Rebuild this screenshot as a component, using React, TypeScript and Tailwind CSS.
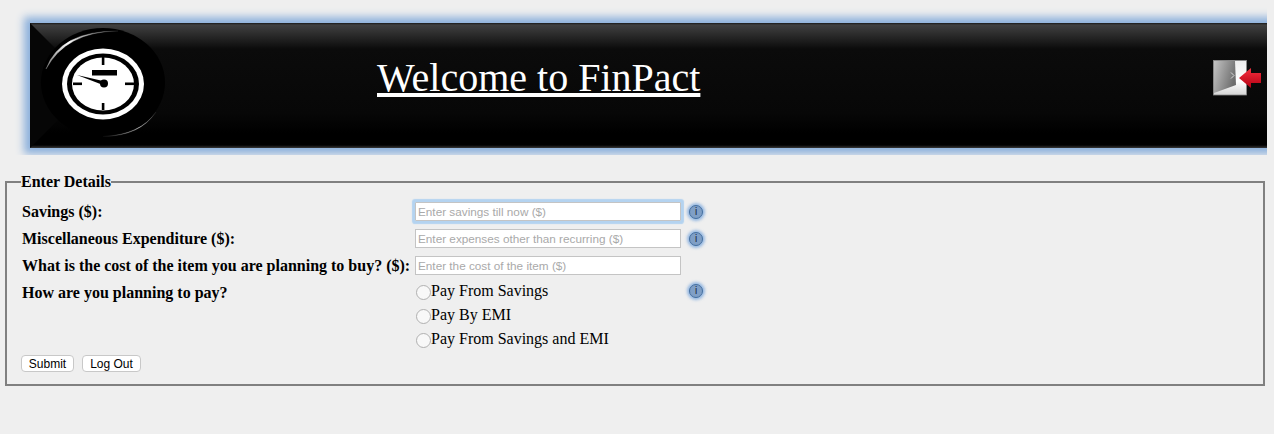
import React from "react";

const serif = "font-['Liberation_Serif','Times_New_Roman',serif]";

function Logo() {
  return (
    <svg width="140" height="125" viewBox="30 23 140 125" className="shrink-0 block">
      <defs>
        <linearGradient id="arcA" x1="0" y1="1" x2="1" y2="0">
          <stop offset="0" stopColor="#ffffff" stopOpacity="0.35" />
          <stop offset="0.5" stopColor="#ffffff" />
          <stop offset="1" stopColor="#ffffff" stopOpacity="0.1" />
        </linearGradient>
        <linearGradient id="arcB" x1="1" y1="0" x2="0" y2="1">
          <stop offset="0" stopColor="#ffffff" stopOpacity="0.1" />
          <stop offset="0.5" stopColor="#ffffff" stopOpacity="0.6" />
          <stop offset="1" stopColor="#ffffff" stopOpacity="0.05" />
        </linearGradient>
      </defs>
      <polygon points="30,23 60,53 60,118 30,148" fill="#060606" />
      <ellipse cx="103" cy="82.5" rx="62" ry="54.5" fill="#000000" />
      <path d="M46 69 Q60 31 118 31 Q66 31.5 46 69Z" fill="url(#arcA)" stroke="url(#arcA)" strokeWidth="0.5" />
      <path d="M103 136.5 Q140 136 156 112 Q140 135 103 136.5Z" fill="url(#arcB)" stroke="url(#arcB)" strokeWidth="0.4" />
      <ellipse cx="103" cy="84" rx="41" ry="35.5" fill="#ffffff" />
      <ellipse cx="103" cy="84" rx="36" ry="30.5" fill="#000000" />
      <ellipse cx="103" cy="84" rx="31" ry="26.5" fill="#ffffff" />
      <rect x="101.8" y="57" width="2.6" height="8" fill="#000" />
      <rect x="101.8" y="103" width="2.6" height="7" fill="#000" />
      <rect x="73" y="82.5" width="9" height="2.6" fill="#000" />
      <rect x="125" y="82.5" width="9" height="2.6" fill="#000" />
      <rect x="92" y="70" width="25" height="5.5" fill="#000" />
      <path d="M77 75 L103 81 L103 85 Z" fill="#000" />
      <circle cx="104" cy="83.5" r="4" fill="#000" />
    </svg>
  );
}

function DoorIcon() {
  return (
    <svg width="49" height="36" viewBox="1213 60 49 36" className="block">
      <defs>
        <linearGradient id="doorBg" x1="0" y1="0" x2="0" y2="1">
          <stop offset="0" stopColor="#ececec" />
          <stop offset="0.6" stopColor="#ffffff" />
          <stop offset="1" stopColor="#d4d4d4" />
        </linearGradient>
        <linearGradient id="door" x1="0" y1="0" x2="1" y2="0.4">
          <stop offset="0" stopColor="#c4c4c4" />
          <stop offset="1" stopColor="#6e6e6e" />
        </linearGradient>
        <linearGradient id="arrow" x1="0" y1="0" x2="0" y2="1">
          <stop offset="0" stopColor="#f6303f" />
          <stop offset="1" stopColor="#b30012" />
        </linearGradient>
      </defs>
      <rect x="1213.5" y="60.5" width="33" height="34.5" fill="url(#doorBg)" stroke="#8a8a8a" strokeWidth="0.8" />
      <polygon points="1214,61 1235,61 1236,85 1214,93" fill="url(#door)" />
      <path d="M1231 72.5 L1234 75.5 L1231 78.5" stroke="#d8d8d8" strokeWidth="1" fill="none" />
      <polygon points="1239,78 1251,68 1251,73 1261,73 1261,83 1251,83 1251,88" fill="url(#arrow)" />
    </svg>
  );
}

function Info() {
  return (
    <div className="ml-[1px] w-[14px] h-[14px] rounded-full bg-[#7f9fc6] border border-[#456f9f] shadow-[0_0_3px_2px_rgba(110,160,220,0.7)] flex items-center justify-center">
      <span className="font-['Liberation_Sans',Arial,sans-serif] text-[10px] leading-none text-[#16243a]">i</span>
    </div>
  );
}

function TextField({ placeholder, focused }: { placeholder: string; focused?: boolean }) {
  return (
    <input
      type="text"
      readOnly
      placeholder={placeholder}
      className={
        "w-[266px] h-[19px] bg-white px-[2px] border border-[#c4c4c4] font-['Liberation_Sans',Arial,sans-serif] text-[11.75px] outline-none placeholder:text-[#a9a9a9] " +
        (focused ? "rounded-[1px] shadow-[0_0_1px_3px_#b4d3f0]" : "")
      }
    />
  );
}

function RadioInput() {
  return (
    <input
      type="radio"
      name="pay"
      className="appearance-none w-[15px] h-[15px] ml-[1px] mt-[2px] rounded-full bg-[#f8f8f8] border border-[#b0b0b0] shrink-0"
    />
  );
}

function Radio({ label }: { label: string }) {
  return (
    <>
      <div />
      <label className="flex items-center h-[24px]">
        <RadioInput />
        <span className="text-[16px] leading-none">{label}</span>
      </label>
      <div className="h-[24px]" />
    </>
  );
}

function Field({ label, info, children }: { label: string; info?: boolean; children: React.ReactNode }) {
  return (
    <>
      <span className="ml-[1px] text-[16px] font-bold leading-[27px] whitespace-nowrap">{label}</span>
      <div className="flex items-center h-[27px]">{children}</div>
      <div className="flex items-center h-[27px]">{info ? <Info /> : null}</div>
    </>
  );
}

export default function App() {
  return (
    <div className={"min-h-screen bg-[#efefef] text-black " + serif}>
      <div className="w-[1267px] overflow-hidden pl-[30px] pt-[23px] pb-[7px]">
        <div className="relative -mr-[30px] h-[125px] flex items-center bg-[linear-gradient(to_bottom,#1a1a1a_0px,#404040_2px,#0b0b0b_26px,#070707_90px,#000000_110px,#000000_122px,#383838_125px)] shadow-[0_0_8px_6px_#8db1dc]">
          <Logo />
          <h1 className="ml-[207px] -mt-[16px] text-[40px] leading-none text-white underline font-normal">Welcome to FinPact</h1>
          <div className="ml-auto mr-[35px] -mt-[15px]">
            <DoorIcon />
          </div>
        </div>
      </div>

      <fieldset className="mt-[18px] mx-[5px] w-[1260px] h-[213px] border-2 border-solid border-[#808080] pl-[14px] pt-[7px]">
        <legend className="text-[16px] font-bold leading-[18px]">Enter Details</legend>
        <div className="grid grid-cols-[394px_273px_auto] items-center">
          <Field label="Savings ($):" info>
            <TextField placeholder="Enter savings till now ($)" focused />
          </Field>
          <Field label="Miscellaneous Expenditure ($):" info>
            <TextField placeholder="Enter expenses other than recurring ($)" />
          </Field>
          <Field label="What is the cost of the item you are planning to buy? ($):">
            <TextField placeholder="Enter the cost of the item ($)" />
          </Field>
          <span className="ml-[1px] text-[16px] font-bold leading-[27px] h-[24px]">How are you planning to pay?</span>
          <label className="flex items-center h-[24px]">
            <RadioInput />
            <span className="text-[16px] leading-none">Pay From Savings</span>
          </label>
          <div className="flex items-center h-[24px]"><Info /></div>
          <Radio label="Pay By EMI" />
          <Radio label="Pay From Savings and EMI" />
        </div>
        <div className="flex gap-[8px] mt-[4px]">
          <button className="h-[17px] w-[53px] bg-white border border-[#c8c8c8] rounded-[4px] font-['Liberation_Sans',Arial,sans-serif] text-[12px] leading-none">Submit</button>
          <button className="h-[17px] w-[59px] bg-white border border-[#c8c8c8] rounded-[4px] font-['Liberation_Sans',Arial,sans-serif] text-[12px] leading-none">Log Out</button>
        </div>
      </fieldset>
    </div>
  );
}
